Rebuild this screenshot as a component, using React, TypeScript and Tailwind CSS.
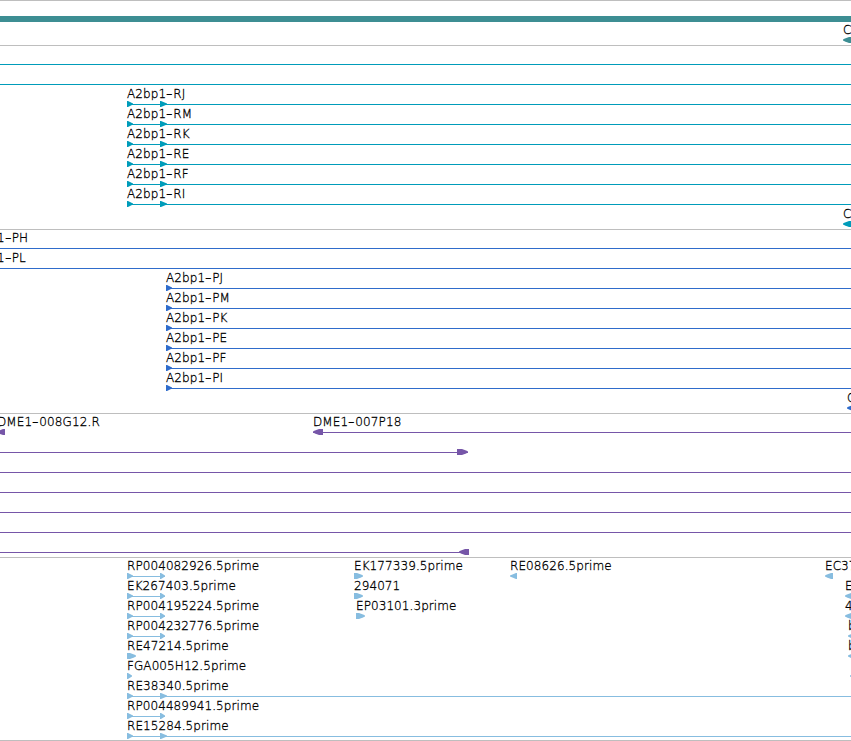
type Direction = "left" | "right";

interface Feature {
  start: number;
  end?: number;
  label?: string;
  line?: boolean;
  dir?: Direction;
  exons?: [number, number][];
}

interface Track {
  color: string;
  padding: string;
  spacing: string;
  rows: Feature[][];
}

const WIDTH = 851;

const span = (): Feature => ({ start: 0, end: WIDTH, line: true });

const transcript = (label: string): Feature => ({
  start: 127,
  end: WIDTH,
  label,
  line: true,
  exons: [[127, 133], [160, 167]],
});

const protein = (label: string): Feature => ({
  start: 166,
  end: WIDTH,
  label,
  line: true,
  exons: [[166, 172]],
});

const est = (label: string, end = 165): Feature => ({
  start: 127,
  end,
  label,
  line: true,
  exons: [[127, 133], [160, end === WIDTH ? 167 : 165]],
});

const block = (start: number, end: number, label?: string, dir: Direction = "right"): Feature => ({
  start,
  end,
  label,
  dir,
  exons: [[start, end]],
});

const tracks: Track[] = [
  {
    color: "#3d8e93",
    padding: "pb-[3px]",
    spacing: "tracking-normal",
    rows: [[], [block(843, 860, "CG", "left")]],
  },
  {
    color: "#009cba",
    padding: "pb-[3px]",
    spacing: "tracking-[0.1px]",
    rows: [
      [span()],
      [span()],
      [transcript("A2bp1-RJ")],
      [transcript("A2bp1-RM")],
      [transcript("A2bp1-RK")],
      [transcript("A2bp1-RE")],
      [transcript("A2bp1-RF")],
      [transcript("A2bp1-RI")],
      [block(843, 860, "CG", "left")],
    ],
  },
  {
    color: "#2f6ccb",
    padding: "pb-[3px]",
    spacing: "tracking-[0.1px]",
    rows: [
      [{ start: -3, end: WIDTH, label: "1-PH", line: true }],
      [{ start: -3, end: WIDTH, label: "1-PL", line: true }],
      [protein("A2bp1-PJ")],
      [protein("A2bp1-PM")],
      [protein("A2bp1-PK")],
      [protein("A2bp1-PE")],
      [protein("A2bp1-PF")],
      [protein("A2bp1-PI")],
      [block(847, 860, "CG", "left")],
    ],
  },
  {
    color: "#7656a8",
    padding: "pb-[3px]",
    spacing: "tracking-[0.12px]",
    rows: [
      [
        block(-3, 5, "DME1-008G12.R", "left"),
        { start: 313, end: WIDTH, label: "DME1-007P18", line: true, dir: "left", exons: [[313, 323]] },
      ],
      [{ start: 0, end: 468, line: true, exons: [[457, 468]] }],
      [span()],
      [span()],
      [span()],
      [span()],
      [{ start: 0, end: 469, line: true, dir: "left", exons: [[459, 469]] }],
    ],
  },
  {
    color: "#87bde0",
    padding: "pb-0.5",
    spacing: "tracking-[0.08px]",
    rows: [
      [
        est("RP004082926.5prime"),
        block(354, 363, "EK177339.5prime"),
        block(510, 517, "RE08626.5prime", "left"),
        block(825, 833, "EC37", "left"),
      ],
      [est("EK267403.5prime"), block(354, 363, "294071"), block(845, 855, "E", "left")],
      [est("RP004195224.5prime"), block(356, 365, "EP03101.3prime"), block(845, 855, "4", "left")],
      [est("RP004232776.5prime"), block(848, 856, "b", "left")],
      [block(127, 136, "RE47214.5prime"), block(848, 856, "b", "left")],
      [block(127, 132, "FGA005H12.5prime"), block(850, 856, undefined, "left")],
      [est("RE38340.5prime", WIDTH)],
      [est("RP004489941.5prime")],
      [est("RE15284.5prime", WIDTH)],
    ],
  },
];

// Short exons are plain triangles, longer ones a box with a rounded tip
function exonPoints(from: number, to: number, dir: Direction) {
  const base = dir === "right" ? from : to;
  const tip = dir === "right" ? to : from;
  const sign = dir === "right" ? -1 : 1;
  if (to - from < 8) {
    return `${base},0 ${base - sign},0 ${tip},2.5 ${tip},3.5 ${base - sign},6 ${base},6`;
  }
  const neck = tip + sign * 6;
  const bend = tip + sign * 2;
  return `${base},0 ${neck},0 ${bend},1.5 ${tip},2.5 ${tip},3.5 ${bend},4.5 ${neck},6 ${base},6`;
}

function Label({ text }: { text: string }) {
  const [head, tail] = text.split("-");
  if (tail === undefined) return <>{text}</>;
  return (
    <>
      {head}
      <span className="inline-block w-[7px] origin-left scale-x-150">-</span>
      {tail}
    </>
  );
}

function FeatureView({ feature, color }: { feature: Feature; color: string }) {
  const { start, end = start, label, line, dir = "right", exons = [] } = feature;
  return (
    <div className="col-start-1 row-start-1 w-0" style={{ marginLeft: start }}>
      <div className="h-[15px] whitespace-pre text-[12px] leading-[16px]">{label && <Label text={label} />}</div>
      <svg width={end - start} height={6} className="block max-w-none overflow-visible" fill={color}>
        {line && <rect x={0} y={3} width={end - start} height={1} />}
        {exons.map(([from, to]) => (
          <polygon key={from} points={exonPoints(from - start, to - start, dir)} />
        ))}
      </svg>
    </div>
  );
}

function TrackView({ track }: { track: Track }) {
  return (
    <section className={`border-t border-[#bebebe] ${track.padding} ${track.spacing}`}>
      {track.rows.map((row, i) => (
        <div key={i} className={`grid grid-cols-1 ${row.length === 0 ? "h-[21px]" : "h-5"}`}>
          {row.length === 0 && <div className="mt-[15px] h-1.5 bg-[#3d8e93]" />}
          {row.map((feature) => (
            <FeatureView key={feature.start} feature={feature} color={track.color} />
          ))}
        </div>
      ))}
    </section>
  );
}

export default function App() {
  return (
    <main className="h-[741px] w-[851px] overflow-hidden bg-white font-['DejaVu_Sans_Light','DejaVu_Sans',sans-serif] text-black [-webkit-text-stroke:0.3px_black]">
      {tracks.map((track) => (
        <TrackView key={track.color} track={track} />
      ))}
      <div className="h-px bg-[#bebebe]" />
    </main>
  );
}
